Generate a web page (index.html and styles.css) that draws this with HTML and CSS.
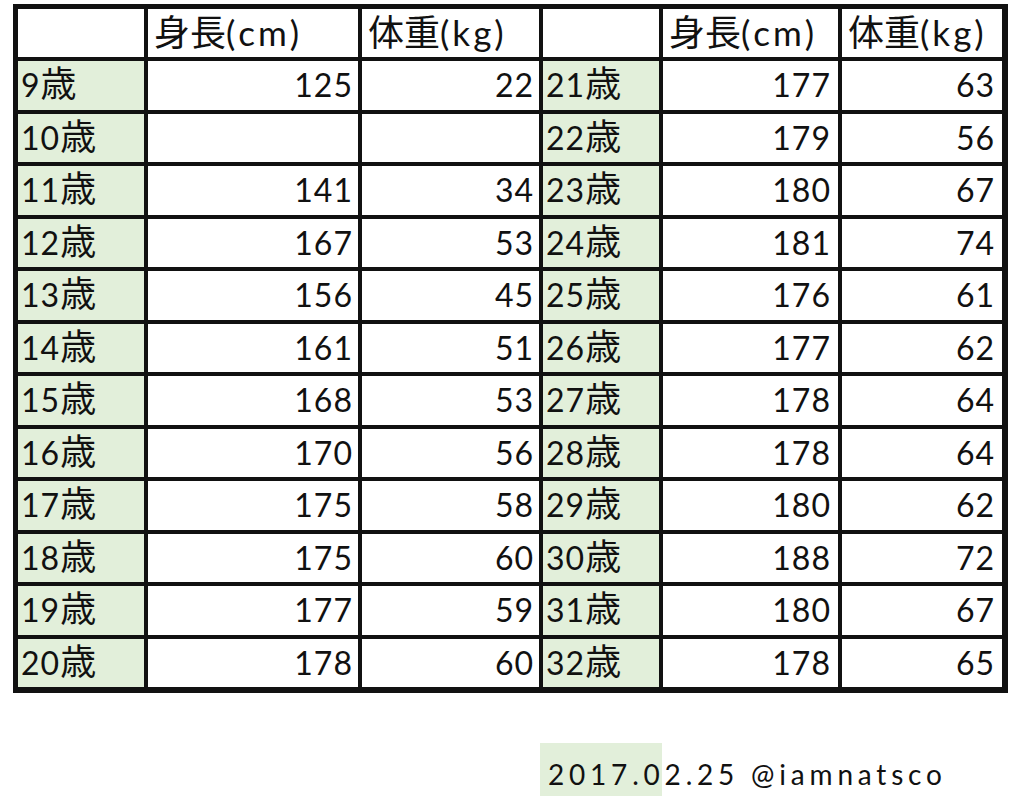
FILE: index.html
```html
<!DOCTYPE html>
<html lang="ja">
<head>
<meta charset="utf-8">
<title>身長・体重</title>
<link rel="stylesheet" href="styles.css">
</head>
<body>
<div class="sheet">
  <div class="c hd"></div>
  <div class="c hd"><span class="kj">身長</span>(cm)</div>
  <div class="c hd"><span class="kj">体重</span>(kg)</div>
  <div class="c hd"></div>
  <div class="c hd"><span class="kj">身長</span>(cm)</div>
  <div class="c hd"><span class="kj">体重</span>(kg)</div>

  <div class="c age">9<span class="kj">歳</span></div><div class="c num">125</div><div class="c num">22</div>
  <div class="c age">21<span class="kj">歳</span></div><div class="c num r">177</div><div class="c num r">63</div>

  <div class="c age">10<span class="kj">歳</span></div><div class="c num"></div><div class="c num"></div>
  <div class="c age">22<span class="kj">歳</span></div><div class="c num r">179</div><div class="c num r">56</div>

  <div class="c age">11<span class="kj">歳</span></div><div class="c num">141</div><div class="c num">34</div>
  <div class="c age">23<span class="kj">歳</span></div><div class="c num r">180</div><div class="c num r">67</div>

  <div class="c age">12<span class="kj">歳</span></div><div class="c num">167</div><div class="c num">53</div>
  <div class="c age">24<span class="kj">歳</span></div><div class="c num r">181</div><div class="c num r">74</div>

  <div class="c age">13<span class="kj">歳</span></div><div class="c num">156</div><div class="c num">45</div>
  <div class="c age">25<span class="kj">歳</span></div><div class="c num r">176</div><div class="c num r">61</div>

  <div class="c age">14<span class="kj">歳</span></div><div class="c num">161</div><div class="c num">51</div>
  <div class="c age">26<span class="kj">歳</span></div><div class="c num r">177</div><div class="c num r">62</div>

  <div class="c age">15<span class="kj">歳</span></div><div class="c num">168</div><div class="c num">53</div>
  <div class="c age">27<span class="kj">歳</span></div><div class="c num r">178</div><div class="c num r">64</div>

  <div class="c age">16<span class="kj">歳</span></div><div class="c num">170</div><div class="c num">56</div>
  <div class="c age">28<span class="kj">歳</span></div><div class="c num r">178</div><div class="c num r">64</div>

  <div class="c age">17<span class="kj">歳</span></div><div class="c num">175</div><div class="c num">58</div>
  <div class="c age">29<span class="kj">歳</span></div><div class="c num r">180</div><div class="c num r">62</div>

  <div class="c age">18<span class="kj">歳</span></div><div class="c num">175</div><div class="c num">60</div>
  <div class="c age">30<span class="kj">歳</span></div><div class="c num r">188</div><div class="c num r">72</div>

  <div class="c age">19<span class="kj">歳</span></div><div class="c num">177</div><div class="c num">59</div>
  <div class="c age">31<span class="kj">歳</span></div><div class="c num r">180</div><div class="c num r">67</div>

  <div class="c age">20<span class="kj">歳</span></div><div class="c num">178</div><div class="c num">60</div>
  <div class="c age">32<span class="kj">歳</span></div><div class="c num r">178</div><div class="c num r">65</div>
</div>
<div class="note">2017.02.25 @iamnatsco</div>
</body>
</html>
```
FILE: styles.css
```css
html, body {
  margin: 0;
  padding: 0;
  background: #ffffff;
}

body {
  font-family: "Lato", "Noto Sans CJK JP", sans-serif;
  color: #111111;
}

.sheet {
  margin: 4px 0 0 13px;
  width: 995px;
  box-sizing: border-box;
  border: 5px solid #111111;
  border-right-width: 6px;
  border-bottom-width: 6px;
  background: #111111;
  display: grid;
  grid-template-columns: 126px 210px 177px 116px 175px 160px;
  grid-template-rows: 48px repeat(12, 48.5px);
  gap: 4px;
}

.c {
  background: #ffffff;
  font-size: 32px;
  line-height: 48px;
  letter-spacing: 1px;
  white-space: nowrap;
}

.hd {
  padding-left: 6px;
  letter-spacing: 3px;
  font-size: 35px;
  line-height: 46px;
}

.age {
  background: #e2efda;
  padding-left: 3px;
}

.num {
  text-align: right;
  padding-right: 5px;
}

.num.r {
  padding-right: 7px;
}

.kj {
  font-family: "Noto Sans CJK JP", sans-serif;
  font-size: 36px;
  line-height: 1;
  letter-spacing: 0;
}

.note {
  margin: 50px 0 0 540px;
  width: 114px;
  height: 43px;
  padding: 10px 0 0 8px;
  background: #e2efda;
  font-size: 28px;
  line-height: 43px;
  letter-spacing: 4.8px;
  white-space: nowrap;
  color: #111111;
}
```
